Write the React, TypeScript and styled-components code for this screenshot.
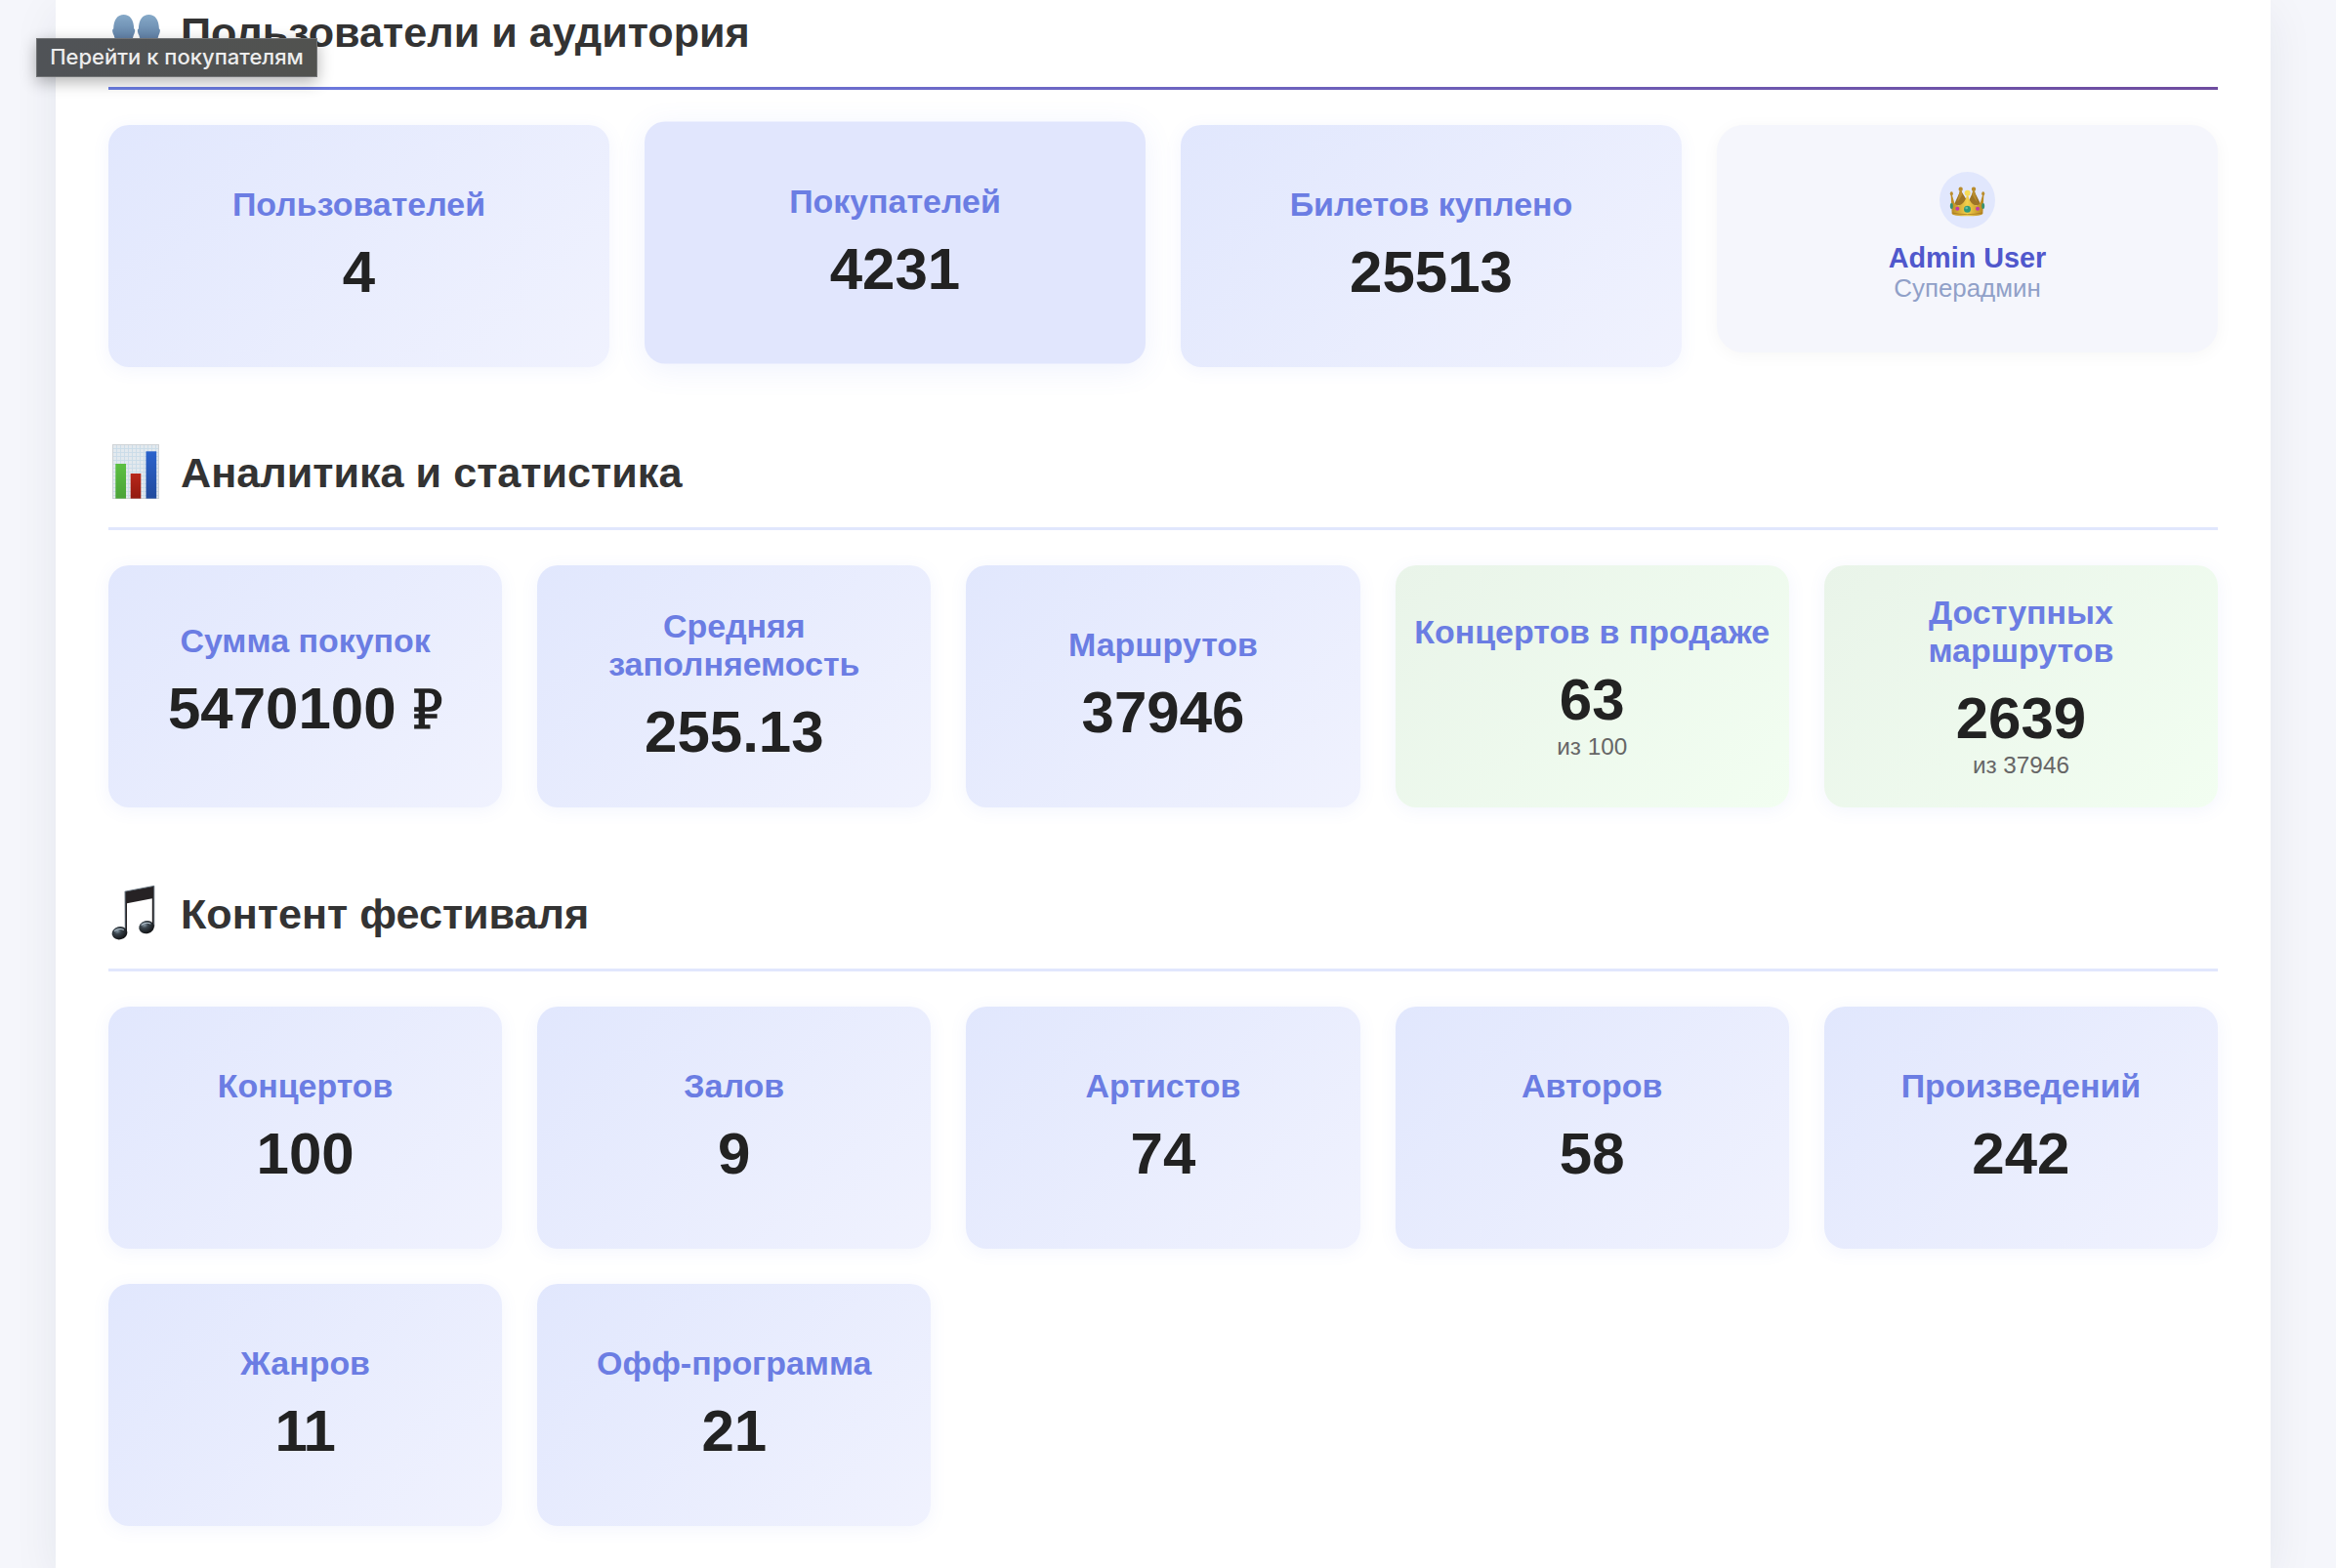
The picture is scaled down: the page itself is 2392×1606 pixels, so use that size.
import React from 'react';
import styled, { createGlobalStyle } from 'styled-components';

const Global = createGlobalStyle`
  *, *::before, *::after { box-sizing: border-box; }
  html, body { margin: 0; padding: 0; height: 1606px; overflow: hidden; }
  body { background: #f5f6fb; font-family: 'Liberation Sans', Arial, sans-serif; }
`;

const Page = styled.div`
  display: flex;
  height: 1606px;
  overflow: hidden;
  padding: 0 67px 0 57px;
`;

const Panel = styled.main`
  display: flex;
  flex-direction: column;
  width: 2268px;
  height: 1606px;
  padding: 0 54px;
  background: #fff;
  box-shadow: 0 12px 44px rgba(31, 38, 68, 0.075);
`;

const Section = styled.section<{ $height: number }>`
  flex: none;
  height: ${(p) => p.$height}px;
  &:first-child { margin-top: -22px; }
`;

const Heading = styled.h2<{ $active?: boolean }>`
  display: flex;
  align-items: center;
  gap: 18px;
  margin: 0 0 36px;
  height: 114px;
  padding: 2px 0 5px;
  border-bottom: 3px solid #e1e7fd;
  border-image: ${(p) => (p.$active ? 'linear-gradient(90deg, #6b7de3, #6e4c9f) 1' : 'none')};
  color: #333;
  font-size: 43.2px;
  line-height: 50px;
  font-weight: 700;
  white-space: nowrap;
`;

const Title = styled.span`
  padding-top: 2px;
`;

const Grid = styled.div<{ $cols: number }>`
  display: grid;
  grid-template-columns: repeat(${(p) => p.$cols}, 1fr);
  gap: 36px;
  align-items: start;
`;

const Card = styled.div<{ $tone?: string; $raised?: boolean }>`
  display: flex;
  flex-direction: column;
  align-items: center;
  justify-content: center;
  height: 248px;
  padding: 0 12px 1px;
  border-radius: 21px;
  text-align: center;
  background: ${(p) =>
    p.$raised
      ? '#e1e6fd'
      : p.$tone === 'green'
        ? 'linear-gradient(135deg, #e9f4e9 0%, #f2fef1 100%)'
        : 'linear-gradient(135deg, #e1e7fd 0%, #f0f2fe 100%)'};
  box-shadow: ${(p) => (p.$raised ? '0 6px 30px rgba(102,126,234,0.1)' : '0 3px 18px rgba(102,126,234,0.08)')};
  transform: ${(p) => (p.$raised ? 'translateY(-3.5px)' : 'none')};
`;

const Label = styled.div`
  color: #6b7de3;
  font-size: 33.95px;
  line-height: 39px;
  font-weight: 700;
`;

const Value = styled.div<{ $money?: boolean }>`
  margin-top: 15px;
  padding-bottom: ${(p) => (p.$money ? 8 : 0)}px;
  color: #222;
  font-size: 60px;
  line-height: 69px;
  font-weight: 700;
  white-space: nowrap;
`;

const Kern = styled.span`
  letter-spacing: -4.4px;
`;

const Ruble = styled.span`
  font-family: 'DejaVu Serif Condensed', 'DejaVu Serif', serif;
  font-stretch: condensed;
  font-size: 54px;
  font-weight: 400;
  line-height: 0;
  -webkit-text-stroke: 1.6px #222;
`;

const Note = styled.div`
  color: #666;
  font-size: 24.3px;
  line-height: 27px;
`;

const AdminCard = styled.div`
  display: flex;
  flex-direction: column;
  align-items: center;
  height: 233px;
  padding-top: 48px;
  border-radius: 27px;
  background: #f5f6fc;
  box-shadow: 0 3px 18px rgba(0, 0, 0, 0.04);
`;

const Avatar = styled.div`
  width: 57px;
  height: 58px;
  border-radius: 50%;
  background: #e1e7fd;
  svg { display: block; }
`;

const AdminName = styled.div`
  margin-top: 14px;
  color: #5058cc;
  font-size: 28.8px;
  line-height: 33px;
  font-weight: 700;
`;

const AdminRole = styled.div`
  color: #90a0c8;
  font-size: 25.9px;
  line-height: 29px;
`;

const Tooltip = styled.div`
  position: absolute;
  left: 37px;
  top: 39px;
  width: 288px;
  height: 40px;
  display: flex;
  align-items: center;
  justify-content: center;
  padding-bottom: 2px;
  border: 1px solid #707274;
  background: linear-gradient(90deg, #505357, #51524f);
  box-shadow: 0 5px 16px rgba(0, 0, 0, 0.3);
  color: #ededed;
  font-family: Inter, sans-serif;
  font-size: 22px;
  font-weight: 500;
  white-space: nowrap;
`;

const UsersIcon = () => (
  <svg width="56" height="56" viewBox="0 0 56 56">
    <defs>
      <linearGradient id="bust" x1="0" y1="11" x2="0" y2="38" gradientUnits="userSpaceOnUse">
        <stop offset="0" stopColor="#86a9c8" />
        <stop offset="1" stopColor="#5d7da3" />
      </linearGradient>
    </defs>
    <g fill="url(#bust)">
      <path id="head" d="M15.7 11C22 11 26 16 26.2 25.5C27.8 26 27.4 29 25.8 32C24.5 38 20.5 43 19.5 43V47L27 51V56H4V51L12 47V43C11 43 7 38 5.6 32C4 29 3.6 26 5.2 25.5C5.4 16 9.4 11 15.7 11Z" />
      <path d="M15.7 11C22 11 26 16 26.2 25.5C27.8 26 27.4 29 25.8 32C24.5 38 20.5 43 19.5 43V47L27 51V56H4V51L12 47V43C11 43 7 38 5.6 32C4 29 3.6 26 5.2 25.5C5.4 16 9.4 11 15.7 11Z" transform="translate(25.7 0)" />
    </g>
  </svg>
);

const ChartIcon = () => (
  <svg width="56" height="56" viewBox="0 0 56 56">
    <defs>
      <pattern id="mesh" width="4" height="4" patternUnits="userSpaceOnUse">
        <rect width="4" height="4" fill="#e3e9ee" />
        <path d="M0 .5H4M.5 0V4" stroke="#c9dbe9" strokeWidth=".9" />
      </pattern>
      <linearGradient id="green" x1="0" y1="0" x2="0" y2="1">
        <stop offset="0" stopColor="#5cc042" /><stop offset="1" stopColor="#4ba338" />
      </linearGradient>
      <linearGradient id="red" x1="0" y1="0" x2="0" y2="1">
        <stop offset="0" stopColor="#b8271b" /><stop offset="1" stopColor="#92190f" />
      </linearGradient>
      <linearGradient id="blue" x1="0" y1="0" x2="0" y2="1">
        <stop offset="0" stopColor="#2a62cc" /><stop offset="1" stopColor="#224b9d" />
      </linearGradient>
    </defs>
    <rect x="4" y="0" width="48" height="56" fill="url(#mesh)" />
    <rect x="4.5" y=".5" width="47" height="55" fill="none" stroke="#cfd3d6" />
    <rect x="7.3" y="20" width="10.7" height="35.6" fill="url(#green)" />
    <rect x="22.7" y="30" width="10.6" height="25.6" fill="url(#red)" />
    <rect x="38.5" y="7.3" width="10.7" height="48.3" fill="url(#blue)" />
  </svg>
);

const NotesIcon = () => (
  <svg width="56" height="56" viewBox="0 0 56 56">
    <defs>
      <radialGradient id="noteHead" cx=".4" cy=".3" r=".7">
        <stop offset="0" stopColor="#8395a2" /><stop offset=".35" stopColor="#39434b" /><stop offset="1" stopColor="#111214" />
      </radialGradient>
    </defs>
    <path d="M16.8 6.2L46.8 .4V42H44.8V13.2L19 18.2V49H17Z" fill="#262224" />
    <path d="M16.8 6.2L46.8 .4V42M17.3 6V48" fill="none" stroke="#596873" strokeWidth=".9" />
    <ellipse cx="11.5" cy="48.7" rx="7.9" ry="6.6" transform="rotate(-14 11.5 48.7)" fill="url(#noteHead)" />
    <ellipse cx="39.1" cy="42.6" rx="7.9" ry="6.6" transform="rotate(-14 39.1 42.6)" fill="url(#noteHead)" />
    <path d="M6.5 46.4Q11 43.2 15.4 45.3M34 40.2Q38.5 37 43 39" fill="none" stroke="#b4c3cd" strokeWidth="1.1" strokeLinecap="round" />
  </svg>
);

const Crown = () => (
  <svg width="57" height="58" viewBox="108 48 171 174">
    <defs>
      <linearGradient id="gold" x1="0" y1="0" x2="1" y2="0">
        <stop offset="0" stopColor="#b98a24" /><stop offset=".5" stopColor="#f3cf4b" /><stop offset="1" stopColor="#b58420" />
      </linearGradient>
    </defs>
    <path d="M152 150L173 104L196 142L213 104L236 150Z" fill="#9c7426" />
    <g fill="#b98c2d">
      <circle cx="173" cy="101" r="6.5" /><circle cx="213" cy="101" r="6.5" />
      <path d="M170 106H176L178 118L171 130L163 140ZM210 106H216L223 140L215 130L208 118Z" />
    </g>
    <path d="M143 120H147L154 144Q158 151 166 151C180 149 188 137 192 120H196C199 137 207 149 221 151Q229 151 233 144L240 120H244L241 177Q237 184 193 184Q149 184 146 177Z" fill="url(#gold)" />
    <ellipse cx="145" cy="115" rx="4.5" ry="6.5" fill="#bb8d2d" />
    <ellipse cx="242" cy="115" rx="4.5" ry="6.5" fill="#bb8d2d" />
    <circle cx="194" cy="113" r="9" fill="#f6dc59" />
    <path d="M147 174Q193 184 240 174" fill="none" stroke="#a0731c" strokeWidth="2" />
    <ellipse cx="145" cy="153" rx="4.5" ry="9" fill="#389273" />
    <ellipse cx="242" cy="153" rx="4.5" ry="9" fill="#389273" />
    <circle cx="193.500" cy="163" r="10.500" fill="#2f9a7b" />
    <circle cx="191" cy="159" r="4" fill="#69bfa4" />
    <circle cx="163" cy="161.500" r="6" fill="#c23aa9" />
    <circle cx="225" cy="161.500" r="6" fill="#c23aa9" />
  </svg>
);

type Stat = {
  label: string;
  value: React.ReactNode;
  note?: string;
  tone?: string;
  raised?: boolean;
  money?: boolean;
};

const users: Stat[] = [
  { label: 'Пользователей', value: '4' },
  { label: 'Покупателей', value: '4231', raised: true },
  { label: 'Билетов куплено', value: '25513' },
];

const analytics: Stat[] = [
  { label: 'Сумма покупок', value: <>5470100 <Ruble>₽</Ruble></>, money: true },
  { label: 'Средняя заполняемость', value: '255.13' },
  { label: 'Маршрутов', value: '37946' },
  { label: 'Концертов в продаже', value: '63', note: 'из 100', tone: 'green' },
  { label: 'Доступных маршрутов', value: '2639', note: 'из 37946', tone: 'green' },
];

const content: Stat[] = [
  { label: 'Концертов', value: '100' },
  { label: 'Залов', value: '9' },
  { label: 'Артистов', value: '74' },
  { label: 'Авторов', value: '58' },
  { label: 'Произведений', value: '242' },
  { label: 'Жанров', value: <><Kern>1</Kern>1</> },
  { label: 'Офф-программа', value: '21' },
];

const StatCard = ({ stat }: { stat: Stat }) => (
  <Card $tone={stat.tone} $raised={stat.raised}>
    <Label>{stat.label}</Label>
    <Value $money={stat.money}>{stat.value}</Value>
    {stat.note && <Note>{stat.note}</Note>}
  </Card>
);

export default function App() {
  return (
    <>
      <Global />
      <Page>
        <Panel>
          <Section $height={451}>
            <Heading $active><UsersIcon /><Title>Пользователи и аудитория</Title></Heading>
            <Grid $cols={4}>
              {users.map((s) => <StatCard key={s.label} stat={s} />)}
              <AdminCard>
                <Avatar><Crown /></Avatar>
                <AdminName>Admin User</AdminName>
                <AdminRole>Суперадмин</AdminRole>
              </AdminCard>
            </Grid>
          </Section>
          <Section $height={452}>
            <Heading><ChartIcon /><Title>Аналитика и статистика</Title></Heading>
            <Grid $cols={5}>{analytics.map((s) => <StatCard key={s.label} stat={s} />)}</Grid>
          </Section>
          <Section $height={720}>
            <Heading><NotesIcon /><Title>Контент фестиваля</Title></Heading>
            <Grid $cols={5}>{content.map((s) => <StatCard key={s.label} stat={s} />)}</Grid>
          </Section>
        </Panel>
      </Page>
      <Tooltip>Перейти к покупателям</Tooltip>
    </>
  );
}
